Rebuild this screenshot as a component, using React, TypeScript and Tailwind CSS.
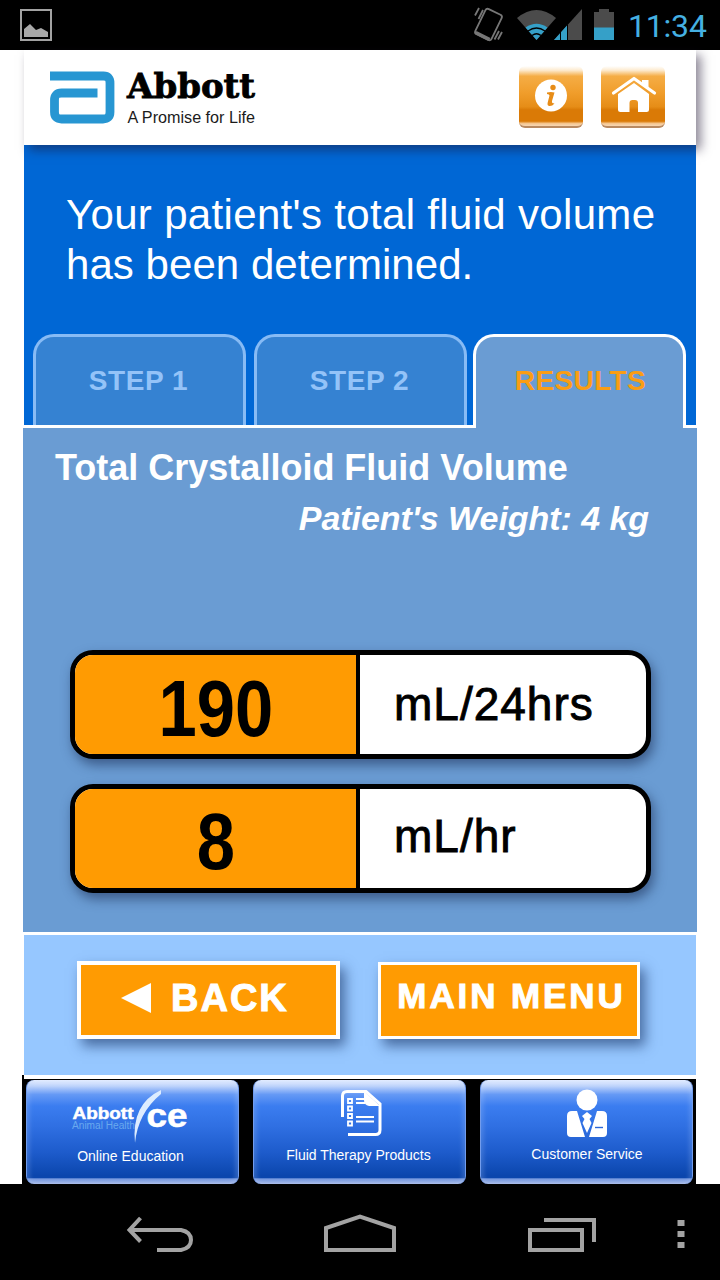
import type { ReactNode } from "react";

function StatusBar() {
  return (
    <header className="flex h-[50px] items-start bg-black">
      <svg className="ml-5 mt-[9px]" width="32" height="32" viewBox="0 0 32 32">
        <rect x="1" y="1" width="30" height="30" fill="none" stroke="#a3a3a3" strokeWidth="2" />
        <path d="M4 28V20L10 15L16 21L21 19L28 23V28Z" fill="#a9a9a9" />
      </svg>
      <svg className="ml-auto" width="158" height="50" viewBox="470 0 158 50">
        <g fill="none" stroke="#777" strokeWidth="1.8">
          <rect x="479.500" y="10.500" width="18" height="28" rx="2.500" transform="rotate(26 488.500 24.500)" />
          <path d="M475 15.500L479 8M478.500 19L483 10M494.500 39.500L499 31M498 39.500L502 32" />
        </g>
        <path d="M476.500 31L490.500 38L488.500 41L475 34Z" fill="#777" />
        <path d="M517 18Q536.500 2 556 18L536.500 40Z" fill="#4b4b4b" />
        <path d="M525.500 27.500Q536.500 20 547.500 27.500L536.500 40Z" fill="#35a0c8" />
        <path d="M528 31Q536.500 25 545 31M532 35.500Q536.500 32 541 35.500" fill="none" stroke="#000" strokeWidth="1.300" />
        <path d="M554 40L582 9V40Z" fill="#4b4b4b" />
        <path d="M554 40L567 25.500V40Z" fill="#35a0c8" />
        <path d="M560.500 31V40M567.500 25V40" stroke="#000" strokeWidth="1" />
        <path d="M594 12H599V9H609V12H614V40H594Z" fill="#4b4b4b" />
        <rect x="594" y="27.500" width="20" height="12.500" fill="#35a0c8" />
      </svg>
      <time className="mt-[6px] w-[92px] whitespace-nowrap font-['Roboto'] text-[32px] leading-[40px] tracking-[-0.2px] text-[#45b0e2]">
        11:34
      </time>
    </header>
  );
}

function IconButton({ label, children }: { label: string; children: ReactNode }) {
  return (
    <button
      aria-label={label}
      className="h-[62px] w-[64px] overflow-hidden rounded-[6px] border-b-2 border-b-[#b98a62] bg-[linear-gradient(180deg,#fff_0%,#fdebd0_7%,#f5ad45_17%,#f09d2b_45%,#e68d17_68%,#da7a06_73%,#da7a06_92%,#f6c894_96%,#f6d7b4_100%)]"
    >
      {children}
    </button>
  );
}

function BrandHeader() {
  return (
    <div className="relative z-10 mx-6 flex h-[95px] bg-white shadow-[5px_5px_10px_rgba(30,20,50,0.5)]">
      <svg className="ml-[26px] mt-[5px]" width="230" height="80" viewBox="50 55 230 80">
        <path
          d="M50 76H103.500Q110 76 110 83V112Q110 119 103 119H61.500Q54.500 119 54.500 112V100Q54.500 93 61.500 93H97.500"
          fill="none"
          stroke="#2796d2"
          strokeWidth="8.800"
        />
        <text x="127" y="98" textLength="128" lengthAdjust="spacingAndGlyphs" className="font-['DejaVu_Serif'] text-[34px] font-bold" stroke="#000" strokeWidth="0.8">
          Abbott
        </text>
        <text x="127.500" y="123" textLength="127.500" lengthAdjust="spacingAndGlyphs" className="font-['Liberation_Sans'] text-[16px]" fill="#1b1b1b">
          A Promise for Life
        </text>
      </svg>
      <div className="ml-auto mr-[31px] mt-[16px] flex gap-[18px]">
        <IconButton label="Information">
          <svg width="64" height="60" viewBox="519 66 64 60">
            <circle cx="551" cy="95.500" r="16" fill="#fff" />
            <circle cx="553" cy="87.500" r="2.700" fill="#e78c17" />
            <path d="M547 92.500Q551 91.500 554.500 92.500L552 101Q551.500 103.500 554.500 103.500Q552 106.500 549 106Q547 105.500 547.700 102.500L549.500 95.500Q549.500 94 547 94Z" fill="#e78c17" />
          </svg>
        </IconButton>
        <IconButton label="Home">
          <svg width="64" height="60" viewBox="601 66 64 60">
            <path d="M642 83V80H648.500V88Z" fill="#fff" />
            <path d="M613.500 93L634 78.500L654.500 93" fill="none" stroke="#fff" strokeWidth="3.200" strokeLinecap="round" strokeLinejoin="round" />
            <path d="M634 83L649 94V109.500Q649 112 646.500 112H638V103Q638 100 635 100H632.500Q629.500 100 629.500 103V112H620.500Q618 112 618 109.500V94Z" fill="#fff" />
          </svg>
        </IconButton>
      </div>
    </div>
  );
}

function Tab({ label, active = false }: { label: string; active?: boolean }) {
  return (
    <button
      className={
        "flex w-[213px] items-start justify-center rounded-t-[21px] border-x-[3px] border-t-[3px] pt-[28px] text-[28px] font-bold leading-[32px] " +
        (active
          ? "relative z-10 -mb-[3px] ml-[6px] h-[94px] border-white bg-[#6a9cd3] pl-[2px] tracking-[0.4px] text-[#fa9d14]"
          : "h-[91px] border-[#87bbf5] bg-[#3582d2] pr-[2px] tracking-[0.6px] text-[#94c3f8]")
      }
    >
      {label}
    </button>
  );
}

function Result({ value, unit, raised = false }: { value: string; unit: string; raised?: boolean }) {
  return (
    <div className="flex h-[109px] overflow-hidden rounded-[23px] border-[5px] border-black bg-white shadow-[3px_6px_12px_rgba(30,50,90,0.6)]">
      <div className={"w-[285px] border-r-4 border-black bg-[#ff9b02] text-center " + (raised ? "pt-[8px]" : "pt-[9px]")}>
        <span className="inline-block scale-x-[0.87] text-[79px] font-bold leading-[90px]">{value}</span>
      </div>
      <span
        className={
          "pl-[34px] text-[46px] leading-[52px] tracking-[1px] [-webkit-text-stroke:0.9px_black] " +
          (raised ? "pt-[21px]" : "pt-[23px]")
        }
      >
        {unit}
      </span>
    </div>
  );
}

const labelPosition = ["mt-[2px] pr-[4px]", "mt-px pr-[2px]", "mt-0 pl-px"];

function FooterButton({ label, slot, children }: { label: string; slot: 0 | 1 | 2; children: ReactNode }) {
  return (
    <button className="flex h-[104px] w-[213px] flex-col items-center rounded-[8px] border-x border-[#729cec] bg-[linear-gradient(180deg,#e9f0ff_0%,#bcd2fb_6%,#6599f5_14%,#3b7df0_25%,#2f6fe2_45%,#1d5bcb_70%,#0b46ad_92%,#0b46ad_94%,#7598df_95%,#a7b9e6_100%)] shadow-[inset_3px_0_4px_rgba(190,215,255,0.2),inset_-3px_0_4px_rgba(190,215,255,0.2)]">
      {children}
      <span className={"whitespace-nowrap text-[14px] leading-[20px] text-white " + labelPosition[slot]}>{label}</span>
    </button>
  );
}

function SystemNav() {
  return (
    <nav className="h-24 bg-black">
      <svg width="720" height="96" viewBox="0 1184 720 96" fill="none" stroke="#a3a3a3" strokeWidth="4">
        <path d="M140.500 1218L129.500 1230L140.500 1241.500M130 1230H181Q191 1232 191 1240Q191 1248 181 1250H157" />
        <path d="M326 1250V1228L360 1216.500L394 1228V1250Z" />
        <path d="M530 1230H582V1250H530ZM544 1220H594V1242" />
        <path d="M677.500 1223H684.500M677.500 1234H684.500M677.500 1245H684.500" strokeWidth="6" />
      </svg>
    </nav>
  );
}

export default function App() {
  return (
    <div className="h-[1280px] w-[720px] overflow-hidden bg-white font-['Liberation_Sans',sans-serif]">
      <StatusBar />
      <BrandHeader />
      <section className="mx-6 h-[280px] bg-[#0067d5]">
        <h1 className="h-[189px] whitespace-nowrap pl-[42px] pt-[45px] text-[42px] leading-[50px] text-white">
          <span className="tracking-[0.33px]">Your patient's total fluid volume</span>
          <br />
          <span className="tracking-[0.05px]">has been determined.</span>
        </h1>
        <div className="flex pl-[9px]">
          <Tab label="STEP 1" />
          <div className="w-2" />
          <Tab label="STEP 2" />
          <Tab label="RESULTS" active />
        </div>
      </section>
      <main className="mx-[23px] h-[510px] border-y-[3px] border-white bg-[#6a9cd3]">
        <h2 className="whitespace-nowrap pl-[32px] pt-[20px] text-[36px] font-bold leading-[40px] text-white">
          Total Crystalloid Fluid Volume
        </h2>
        <p className="whitespace-nowrap pr-[48px] pt-[10px] text-right text-[34px] font-bold italic leading-[40px] tracking-[-0.05px] text-white">
          Patient's Weight: 4 kg
        </p>
        <div className="ml-[47px] mt-[112px] flex w-[581px] flex-col gap-[25px]">
          <Result value="190" unit="mL/24hrs" />
          <Result value="8" unit="mL/hr" raised />
        </div>
      </main>
      <section className="mx-6 flex h-[140px] items-start bg-[#96c7ff] pl-[53px] pt-[26px]">
        <button className="flex h-[78px] w-[263px] border-4 border-white bg-[#ff9b02] pl-[40px] text-[38px] font-bold text-white shadow-[5px_7px_12px_rgba(30,60,110,0.65)]">
          <svg className="mt-[18px]" width="30" height="30" viewBox="0 0 30 30" fill="#fff">
            <path d="M0 15L30 0V30Z" />
          </svg>
          <span className="ml-[20px] mt-[11px] leading-[44px] tracking-[2px] [-webkit-text-stroke:1px_white]">BACK</span>
        </button>
        <button className="ml-[38px] mt-px h-[77px] w-[262px] whitespace-nowrap border-[3px] border-white bg-[#ff9b02] pb-[9px] pl-[5px] text-[35px] font-bold tracking-[2.900px] text-white shadow-[5px_7px_12px_rgba(30,60,110,0.65)] [-webkit-text-stroke:1px_white]">
          MAIN MENU
        </button>
      </section>
      <footer className="ml-[22px] mr-6 h-[109px] border-l-2 border-black">
        <div className="h-1 bg-white" />
        <div className="flex h-[105px] justify-between bg-black pl-[2px] pr-[3px] pt-px">
          <FooterButton label="Online Education" slot={0}>
            <svg width="126" height="64" viewBox="70 1080 126 64">
              <text x="72.500" y="1119" textLength="61" lengthAdjust="spacingAndGlyphs" fill="#fff" stroke="#fff" strokeWidth="0.5" className="text-[17px] font-bold">Abbott</text>
              <text x="72" y="1129" textLength="63" lengthAdjust="spacingAndGlyphs" fill="#69a9ee" className="text-[10px]">Animal Health</text>
              <path d="M161 1090Q131 1104 135 1143Q138 1113 161 1094Z" fill="#dcecff" />
              <text x="146.500" y="1127" textLength="41" lengthAdjust="spacingAndGlyphs" fill="#fff" stroke="#fff" strokeWidth="0.6" className="text-[34px] font-bold">ce</text>
            </svg>
          </FooterButton>
          <FooterButton label="Fluid Therapy Products" slot={1}>
            <svg width="50" height="64" viewBox="335 1080 50 64" fill="none" stroke="#fff" strokeWidth="3">
              <path d="M342.500 1117V1096Q342.500 1091.500 347 1091.500H366L380 1104V1130Q380 1134.500 375.500 1134.500H348" />
              <path d="M364 1091L380 1106H369Q364 1105 364 1100Z" fill="#fff" stroke="none" />
              <path d="M348 1099h4v4h-4ZM348 1106.500h4v4h-4ZM348 1114h4v4h-4ZM348 1121.500h4v4h-4Z" strokeWidth="1.800" />
              <path d="M356 1099H364M356 1103H365M356 1117H374M356 1121.500H374" strokeWidth="1.800" />
            </svg>
          </FooterButton>
          <FooterButton label="Customer Service" slot={2}>
            <svg width="50" height="64" viewBox="562 1080 50 64" fill="#fff">
              <circle cx="587" cy="1100" r="10.500" />
              <path d="M572 1111H577L585 1137H571Q567 1137 567 1133V1116Q567 1111 572 1111ZM597 1111H602Q607 1111 607 1116V1133Q607 1137 603 1137H589Z" />
              <path d="M587 1112L592 1116L589.500 1119L591.500 1123L587 1133L582.500 1123L584.500 1119L582 1116Z" />
              <path d="M595 1127.500H603" stroke="#2b68d9" strokeWidth="1.400" />
            </svg>
          </FooterButton>
        </div>
      </footer>
      <SystemNav />
    </div>
  );
}
